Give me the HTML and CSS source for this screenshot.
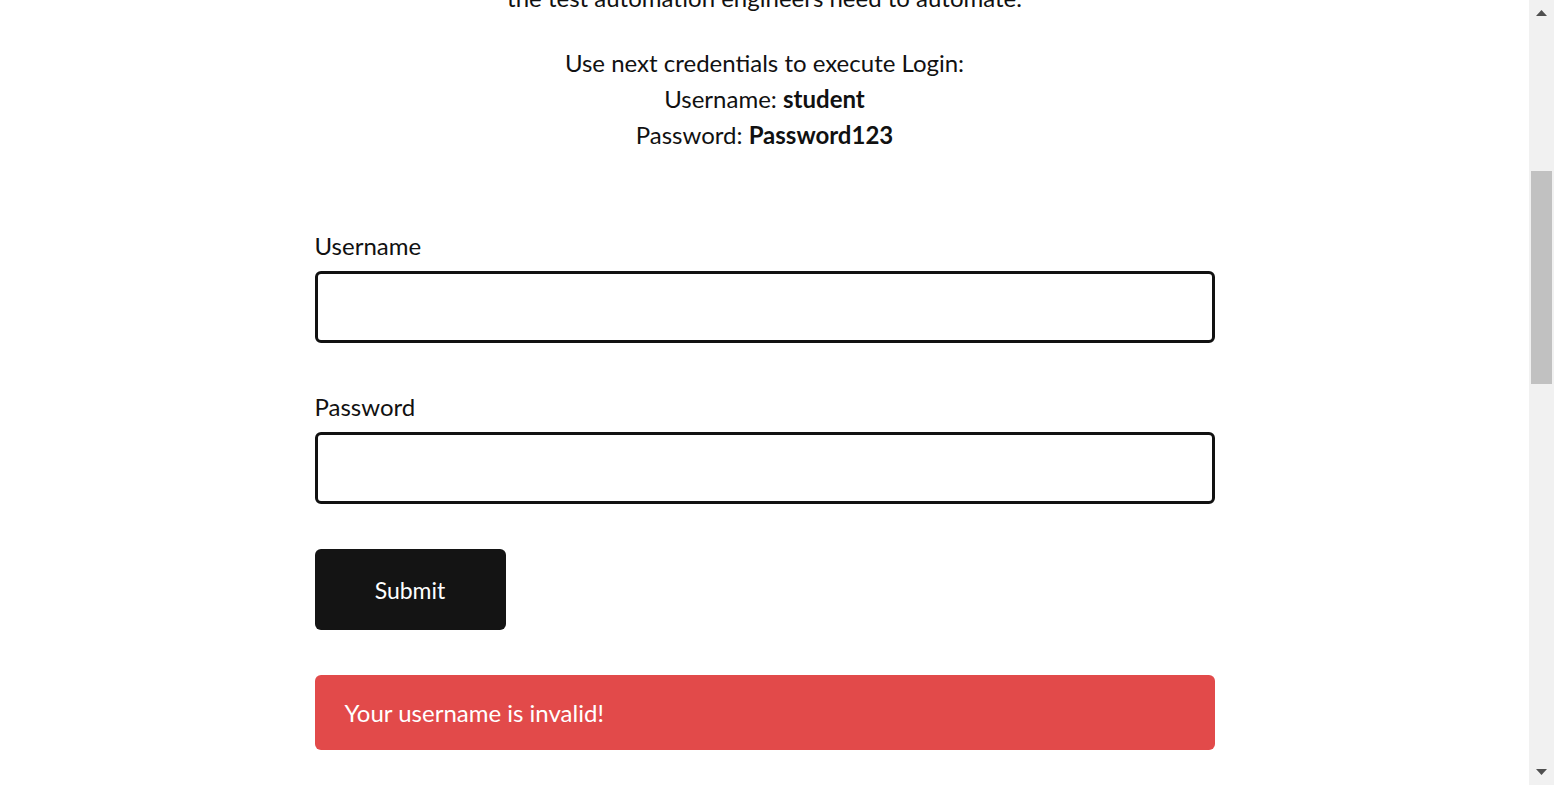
FILE: index.html
```html
<!DOCTYPE html>
<html lang="en">
<head>
<meta charset="utf-8">
<title>Test Login | Practice Test Automation</title>
<link rel="stylesheet" href="styles.css">
</head>
<body>
<div class="window">
  <div class="page" id="page">
    <header class="site-header">
      <div class="header-inner">
        <div class="logo">Practice Test Automation</div>
        <nav class="menu">
          <a href="#">Home</a>
          <a href="#">Practice</a>
          <a href="#">Courses</a>
          <a href="#">Blog</a>
          <a href="#">Contact</a>
        </nav>
      </div>
    </header>
    <main class="content">
      <section class="login-section">
        <h2 class="title">Test login</h2>
        <p class="intro">This is a simple Login page. Students can use this page to practice writing simple positive and negative LogIn tests. Login functionality is something that most of<br>the test automation engineers need to automate.</p>
        <p class="creds" id="creds">Use next credentials to execute Login:<br>Username: <b>student</b><br>Password: <b>Password123</b></p>
        <form class="login-form" onsubmit="return false">
          <div class="field">
            <label for="username">Username</label>
            <input type="text" id="username" name="username">
          </div>
          <div class="field field-last">
            <label for="password">Password</label>
            <input type="password" id="password" name="password">
          </div>
          <button class="submit" type="submit">Submit</button>
        </form>
        <div class="error">Your username is invalid!</div>
      </section>
    </main>
    <footer class="site-footer">
      <p>© Copyright 2020 Practice Test Automation</p>
    </footer>
  </div>
  <div class="scrollbar" aria-hidden="true">
    <div class="sb-btn">
      <svg width="11" height="6" viewBox="0 0 11 6"><polygon points="5.5,0 11,6 0,6" fill="#505050"/></svg>
    </div>
    <div class="sb-track">
      <div class="sb-thumb"></div>
    </div>
    <div class="sb-btn">
      <svg width="11" height="6" viewBox="0 0 11 6"><polygon points="0,0 11,0 5.5,6" fill="#505050"/></svg>
    </div>
  </div>
</div>
<script src="script.js"></script>
</body>
</html>
```
FILE: styles.css
```css
html, body {
  margin: 0;
  padding: 0;
  height: 100%;
  overflow: hidden;
}
body {
  font-family: Lato, "Open Sans", sans-serif;
  color: #111;
  background: #fff;
}
.window {
  display: flex;
  height: 785px;
}
.page {
  flex: 1;
  min-width: 0;
  overflow: hidden;
}
.site-header {
  height: 160px;
  border-bottom: 1px solid #eee;
}
.header-inner {
  max-width: 1200px;
  margin: 0 auto;
  height: 100%;
  display: flex;
  align-items: center;
  justify-content: space-between;
  padding: 0 20px;
}
.logo {
  font-size: 28px;
  font-weight: 700;
}
.menu {
  display: flex;
  gap: 32px;
}
.menu a {
  color: #111;
  text-decoration: none;
  font-size: 18px;
}
.content {
  display: flex;
  justify-content: center;
  padding: 120px 0 0;
}
.login-section {
  width: 900px;
  display: flex;
  flex-direction: column;
}
.title {
  font-size: 48px;
  font-weight: 700;
  text-align: center;
  margin: 0 0 40px;
}
.intro,
.creds {
  font-size: 24px;
  line-height: 36px;
  text-align: center;
  margin: 0 0 29px;
}
.creds b {
  font-weight: 700;
}
.creds {
  margin-bottom: 75px;
}
.login-form {
  display: flex;
  flex-direction: column;
  align-items: flex-start;
}
.field {
  display: flex;
  flex-direction: column;
  width: 100%;
  margin-bottom: 46px;
}
.field-last {
  margin-bottom: 45px;
}
.field label {
  font-size: 24px;
  line-height: 36px;
  margin-bottom: 7px;
}
.field input {
  box-sizing: border-box;
  width: 100%;
  height: 72px;
  border: 3px solid #111;
  border-radius: 6px;
  padding: 0 18px;
  font-size: 22px;
  font-family: inherit;
  background: #fff;
}
.submit {
  width: 191px;
  height: 81px;
  border: none;
  border-radius: 6px;
  background: #141414;
  color: #fff;
  font-family: inherit;
  font-size: 23px;
  margin-top: 0;
  cursor: pointer;
}
.error {
  margin-top: 45px;
  height: 75px;
  box-sizing: border-box;
  background: #e24a4a;
  color: #fff;
  border-radius: 6px;
  padding: 0 30px;
  display: flex;
  align-items: center;
  font-size: 24px;
}
.site-footer {
  margin-top: 1200px;
  padding: 80px 0;
  text-align: center;
  font-size: 16px;
  color: #666;
}
.scrollbar {
  width: 25px;
  flex: none;
  display: flex;
  flex-direction: column;
  background: #f1f1f1;
}
.sb-btn {
  height: 26px;
  display: flex;
  align-items: center;
  justify-content: center;
  flex: none;
}
.sb-btn svg {
  display: block;
}
.sb-track {
  flex: 1;
  padding: 0 2px;
}
.sb-thumb {
  margin-top: 145px;
  height: 213px;
  background: #c1c1c1;
}
```
FILE: script.js
```js
var page = document.getElementById('page');
var creds = document.getElementById('creds');
page.scrollTop = creds.getBoundingClientRect().top - page.getBoundingClientRect().top - 45;
```
